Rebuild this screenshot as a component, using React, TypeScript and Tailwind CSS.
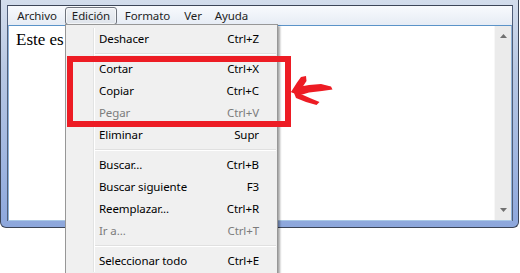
import React from 'react';

const menuBar = [
  { label: 'Archivo', w: 'w-[56px] ml-px' },
  { label: 'Edición', w: 'w-[52px]', open: true },
  { label: 'Formato', w: 'w-[61px]' },
  { label: 'Ver', w: 'w-[30px]' },
  { label: 'Ayuda', w: 'w-[47px]' },
];

type Item = { label: string; key?: string; off?: boolean } | 'sep';

const items: Item[] = [
  { label: 'Deshacer', key: 'Ctrl+Z' },
  'sep',
  { label: 'Cortar', key: 'Ctrl+X' },
  { label: 'Copiar', key: 'Ctrl+C' },
  { label: 'Pegar', key: 'Ctrl+V', off: true },
  { label: 'Eliminar', key: 'Supr' },
  'sep',
  { label: 'Buscar...', key: 'Ctrl+B' },
  { label: 'Buscar siguiente', key: 'F3' },
  { label: 'Reemplazar...', key: 'Ctrl+R' },
  { label: 'Ir a...', key: 'Ctrl+T', off: true },
  'sep',
  { label: 'Seleccionar todo', key: 'Ctrl+E' },
];

function EditMenu() {
  return (
    <div className="absolute left-[-1px] top-full z-10 flex w-[213px] border border-[#979797] bg-[#f0f0f0] pb-[20px] pt-[3px] shadow-[2px_2px_2px_rgba(0,0,0,0.35)]">
      <div className="w-[28px] shrink-0 border-r border-[#e2e3e3]" />
      <div className="flex-1 border-l border-white">
        {items.map((it, i) =>
          it === 'sep' ? (
            <div key={i} className="h-[8px] pt-[3px] pr-[1px]">
              <div className="h-px bg-[#e0e0e0]" />
              <div className="h-px bg-white" />
            </div>
          ) : (
            <div
              key={i}
              className={`flex h-[22px] items-center justify-between pl-[4px] pr-[18px] ${it.off ? 'text-[#7c7c7c]' : 'text-black'}`}
            >
              <span>{it.label}</span>
              <span>{it.key}</span>
            </div>
          )
        )}
      </div>
    </div>
  );
}

function Arrow() {
  return (
    <svg className="absolute left-[288px] top-[74px] z-20" width="48" height="34" viewBox="288 74 48 34">
      <g fill="#ed1c24">
        <path d="M291,92 L298,87 L309,85 L321,84 L331,86.5 L332.5,89.5 L322,91 L309,92.5 L299,95.5 Z" />
        <path d="M291,92 L297,82.5 L301,77 L306,76 L306.5,81 L302.5,87 L298,94 Z" />
        <path d="M294,93 L303,95 L311,98.5 L319.5,102 L316.5,105 L306,102 L296,98 Z" />
      </g>
    </svg>
  );
}

export default function App() {
  return (
    <div className="relative h-[273px] w-[520px] overflow-hidden bg-white font-['Noto_Sans',sans-serif] text-[11.5px] leading-none tracking-[-0.1px]">
      <div className="h-[228px] w-[519px] rounded-b-[6px] border border-t-0 border-[#3b4456] bg-[linear-gradient(to_bottom,#d3ddec,#b8c8e3_30%,#9db4e0_75%,#8da7dc)] pb-[6px] pl-[6px] pr-[5px] pt-[5px]">
        <div className="flex h-full flex-col border-x border-t border-x-[#4f5d77] border-t-[#3c4658]">
          {/* menu bar */}
          <div className="flex h-[19px] items-center bg-[linear-gradient(to_bottom,#f8fafd,#e6ecf5)] text-[#1e1e1e]">
            {menuBar.map((m) => (
              <div
                key={m.label}
                className={`relative flex h-[18px] items-center justify-center ${m.w} ${m.open ? 'rounded-[3px] border border-[#6e737c] bg-[linear-gradient(to_bottom,#eef1f5,#dfe4eb)] shadow-[inset_0_0_0_1px_rgba(255,255,255,0.6)]' : ''}`}
              >
                {m.label}
                {m.open && <EditMenu />}
              </div>
            ))}
          </div>
          {/* edit control */}
          <div className="flex flex-1 border-x border-b border-t border-x-[#8fb2d8] border-b-[#a9c8e6] border-t-[#5b93c8] bg-white">
            <div className="flex-1 pl-[7px] pt-[4px] font-['Liberation_Serif',serif] text-[17px] leading-[19px] tracking-normal text-black">
              <div className="w-[48px] overflow-hidden whitespace-nowrap">Este es</div>
            </div>
            <div className="flex w-[17px] flex-col items-center justify-between border-l border-[#f7f7f7] bg-[#ebebeb] py-[8px]">
              <svg width="7" height="4" viewBox="0 0 7 4">
                <path d="M0,4 L3.5,0 L7,4 Z" fill="#707070" />
              </svg>
              <svg width="7" height="4" viewBox="0 0 7 4">
                <path d="M0,0 L7,0 L3.5,4 Z" fill="#707070" />
              </svg>
            </div>
          </div>
        </div>
      </div>

      {/* annotation */}
      <div className="absolute left-[67px] top-[56px] z-20 h-[71px] w-[224px] border-[6px] border-[#ed1c24]" />
      <Arrow />
    </div>
  );
}
